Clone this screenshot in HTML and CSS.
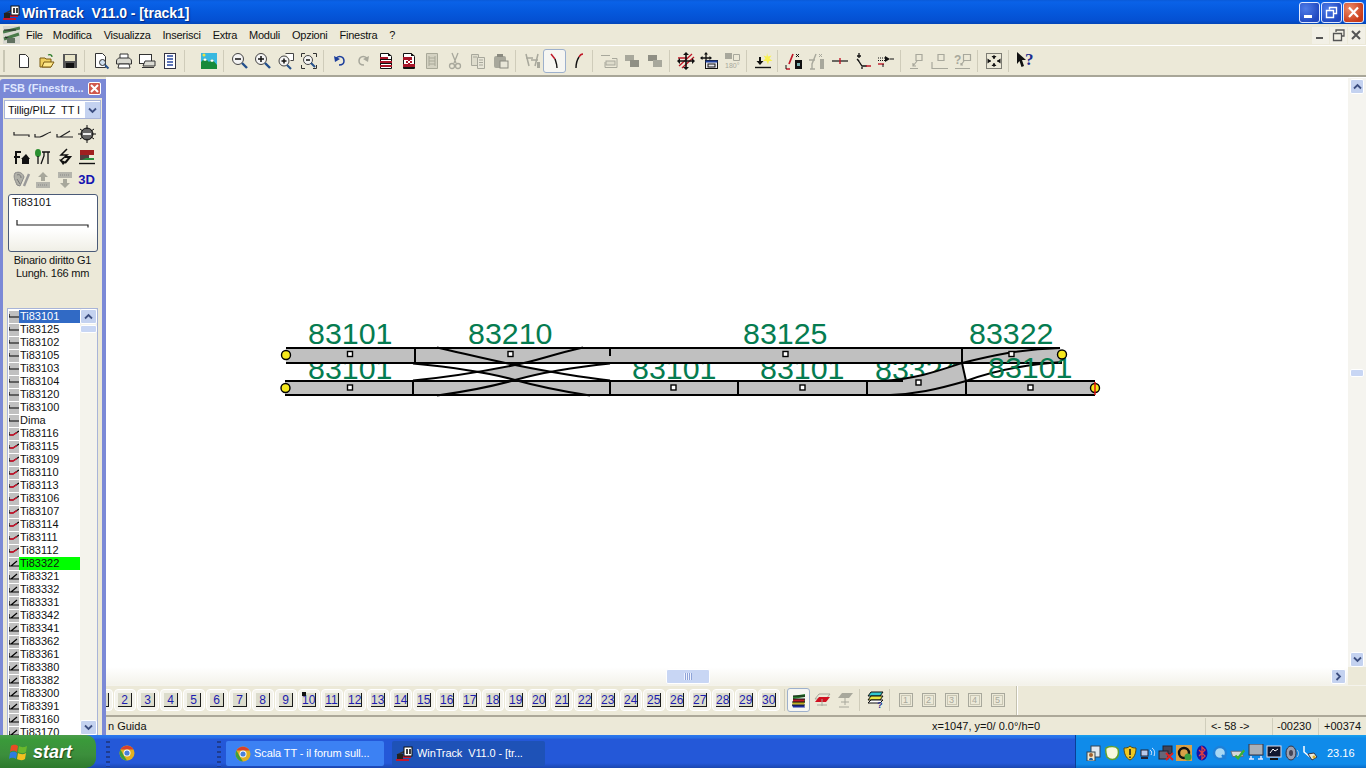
FILE: index.html
```html
<!DOCTYPE html>
<html lang="it">
<head>
<meta charset="utf-8">
<title>WinTrack V11.0 - [track1]</title>
<link rel="stylesheet" href="styles.css">
</head>
<body>
<svg class="defs" width="0" height="0" aria-hidden="true">
  <defs>
    <symbol id="li-straight" viewBox="0 0 10 12"><rect width="10" height="12" fill="#c0c0c0"/><path d="M0 3v3h10" fill="none" stroke="#000" stroke-width="1.2"/></symbol>
    <symbol id="li-curve" viewBox="0 0 10 12"><rect width="10" height="12" fill="#c0c0c0"/><path d="M0 4v3h4l6-4" fill="none" stroke="#000" stroke-width="1.1"/><path d="M1 7h3l4-2.5" fill="none" stroke="#d8102a" stroke-width="1.3"/></symbol>
    <symbol id="li-turnout" viewBox="0 0 10 12"><rect width="10" height="12" fill="#c0c0c0"/><path d="M0 4v4h10M2 8l6-5" fill="none" stroke="#000" stroke-width="1.2"/></symbol>
    <symbol id="chrome" viewBox="0 0 16 16"><circle cx="8" cy="8" r="7.5" fill="#e0b020"/><path d="M1.5 4.5A7.500 7.500 0 0 1 14.5 4.5H8z" fill="#d8402c"/><path d="M1.500 4.500L5 11l3 4.500A7.500 7.500 0 0 1 1.500 4.500z" fill="#3e9e3c"/><circle cx="8" cy="8" r="3.5" fill="#fff"/><circle cx="8" cy="8" r="2.6" fill="#4a80d8"/></symbol>
    <symbol id="wt" viewBox="0 0 18 16"><path d="M1 9l15-7" stroke="#333" stroke-width="1.5"/><path d="M1 11h14M0 14h13" stroke="#c01830" stroke-width="2"/><rect x="8" y="1" width="8" height="9" fill="#fff" stroke="#111"/><path d="M11 3v5M14 3v5" stroke="#111" stroke-width="1.6"/><path d="M1 8h6v5H1z" fill="#222"/></symbol>
  </defs>
</svg>

<header class="titlebar">
  <svg class="ti-icon" width="18" height="16"><use href="#wt"/></svg>
  <span class="ti-text">WinTrack&nbsp; V11.0 - [track1]</span>
  <div class="capbtns">
    <span class="cap cap-b"><svg width="19" height="19"><rect x="4" y="12" width="8" height="3" fill="#fff"/></svg></span>
    <span class="cap cap-b"><svg width="19" height="19"><path d="M7.5 6.500V4.500h7v6h-2.500M4.500 7.500h7v7h-7z" fill="none" stroke="#fff" stroke-width="1.4"/></svg></span>
    <span class="cap cap-r"><svg width="19" height="19"><path d="M5 4.500l9 9.500M14 4.500l-9 9.500" stroke="#fff" stroke-width="2.2"/></svg></span>
  </div>
</header>

<nav class="menubar">
  <svg class="me-icon" width="17" height="18" viewBox="0 0 17 18"><rect width="17" height="18" fill="#d8d8d0"/><path d="M0 6l17-4M1 13l15-5" stroke="#4a7a4a" stroke-width="3"/><path d="M1 4h12M2 11l10 4" stroke="#222" stroke-width="1.2"/><rect x="4" y="12" width="8" height="5" fill="#607060"/></svg>
  <span class="me me-file">File</span><span class="me">Modifica</span><span class="me">Visualizza</span><span class="me">Inserisci</span><span class="me">Extra</span><span class="me">Moduli</span><span class="me">Opzioni</span><span class="me">Finestra</span><span class="me">?</span>
  <div class="mdi">
    <svg width="17" height="17"><rect x="4" y="10" width="7" height="2" fill="#555"/></svg>
    <svg width="17" height="17"><path d="M6 5V3h8v6h-2M3.500 6.500h8v7h-8z" fill="none" stroke="#555" stroke-width="1.3"/></svg>
    <svg width="17" height="17"><path d="M4 4l8 8M12 4l-8 8" stroke="#555" stroke-width="2"/></svg>
  </div>
</nav>

<div class="toolbar">
  <i class="grip"></i>
  <span class="tb"><svg width="16" height="16"><path d="M3.500 1.500h6l3 3v10h-9z" fill="#fff" stroke="#333"/></svg></span>
  <span class="tb"><svg width="16" height="16"><path d="M1 14V5h5l1 1h5v8z" fill="#f0d060" stroke="#7a5a10"/><path d="M3 14l2-5h10l-3 5z" fill="#ffe88a" stroke="#7a5a10"/><path d="M9 2c2-1 4 0 4 2" fill="none" stroke="#2a7a2a" stroke-width="1.3"/></svg></span>
  <span class="tb"><svg width="16" height="16"><rect x="1" y="1" width="14" height="14" fill="#555"/><rect x="3" y="2" width="10" height="6" fill="#e8e4c8"/><rect x="4" y="10" width="8" height="5" fill="#111"/></svg></span>
  <i class="sep"></i>
  <span class="tb"><svg width="18" height="18"><path d="M3.500 1.500h7l3 3v11h-10z" fill="#fff" stroke="#333"/><circle cx="10.500" cy="10.500" r="3" fill="#cfe0f0" stroke="#333"/><path d="M13 13l3.500 3.500" stroke="#25508a" stroke-width="2"/></svg></span>
  <span class="tb"><svg width="18" height="18"><path d="M5 7V2h8v5" fill="#fff" stroke="#333"/><path d="M1.500 9c0-2 2-3 3-3h9c1 0 3 1 3 3v3h-15z" fill="#d8d8d0" stroke="#333"/><path d="M4 12h10l1 4H3z" fill="#fff" stroke="#333"/></svg></span>
  <span class="tb"><svg width="18" height="18"><rect x="1.500" y="2.500" width="12" height="9" fill="#fff" stroke="#333"/><path d="M7 9h10v5H5z" fill="#dcdcd4" stroke="#333"/><path d="M4 15.500h12" stroke="#333"/></svg></span>
  <span class="tb"><svg width="16" height="18"><rect x="2.500" y="1.500" width="11" height="15" fill="#fff" stroke="#334"/><path d="M5 4h6M5 7h6M5 10h6M5 13h6" stroke="#2848a0" stroke-width="1.4"/></svg></span>
  <i class="sep"></i>
  <i class="spacer"></i>
  <span class="tb"><svg width="16" height="16"><rect width="16" height="16" fill="#38b8e0"/><path d="M0 16V9l4-4 4 4 3-3 5 6v4z" fill="#178a3a"/><path d="M4 5l2 2-2 1-2-1zM11 6l2 2-2 1-2-1z" fill="#fff"/><circle cx="3" cy="2" r="1.500" fill="#f0e040"/></svg></span>
  <i class="sep"></i>
  <span class="tb"><svg width="18" height="18"><circle cx="7" cy="7" r="5.500" fill="#f4f4f4" stroke="#444"/><path d="M4 7h6" stroke="#111" stroke-width="1.5"/><path d="M11 11l5 5" stroke="#24508c" stroke-width="2.4"/></svg></span>
  <span class="tb"><svg width="18" height="18"><circle cx="7" cy="7" r="5.500" fill="#f4f4f4" stroke="#444"/><path d="M4 7h6M7 4v6" stroke="#111" stroke-width="1.5"/><path d="M11 11l5 5" stroke="#24508c" stroke-width="2.4"/></svg></span>
  <span class="tb"><svg width="18" height="18"><path d="M8.500 1.500h8v7h-3" fill="#fff" stroke="#444"/><circle cx="7" cy="9" r="5" fill="#f4f4f4" stroke="#444"/><path d="M4.500 9h5M7 6.500v5" stroke="#111" stroke-width="1.5"/><path d="M10 13l4 4" stroke="#24508c" stroke-width="2.2"/></svg></span>
  <span class="tb"><svg width="18" height="18"><path d="M1.500 5V1.500H5M13 1.500h3.500V5M1.500 13v3.500H5M13 16.500h3.500V13" fill="none" stroke="#333"/><circle cx="8" cy="8" r="4.500" fill="#f4f4f4" stroke="#444"/><path d="M6 8h4" stroke="#111" stroke-width="1.5"/><path d="M11 11l4 4" stroke="#24508c" stroke-width="2"/></svg></span>
  <i class="sep"></i>
  <span class="tb"><svg width="16" height="16"><path d="M4 5c4-3 8-1 8 3s-4 4-5 4" fill="none" stroke="#1c3e9c" stroke-width="1.5"/><path d="M2 3l1 6 5-3z" fill="#1c3e9c"/></svg></span>
  <span class="tb"><svg width="16" height="16"><path d="M12 5C8 2 4 4 4 8s4 4 5 4" fill="none" stroke="#a8a89c" stroke-width="1.5"/><path d="M14 3l-1 6-5-3z" fill="#a8a89c"/></svg></span>
  <span class="tb"><svg width="16" height="18"><path d="M2.500 1.500h8l3 3v12h-11z" fill="#fff" stroke="#111"/><path d="M10 1l4 3h-4z" fill="#111"/><path d="M2 5h8v2H2zM2 9h12v2H2zM2 13h12v2H2z" fill="#a81428"/><path d="M3 7.500h10M3 11.500h10" stroke="#111"/></svg></span>
  <span class="tb"><svg width="16" height="18"><path d="M2.500 1.500h8l3 3v12h-11z" fill="#fff" stroke="#111"/><path d="M10 1l4 3h-4z" fill="#111"/><path d="M2 5h9v3H2zM2 12h12v3H2z" fill="#a81428"/><path d="M5 9h2v2H5zM9 9h2v2H9zM7 8h2v1H7zM7 11h2v1H7z" fill="#a81428"/><path d="M3 15.500h10" stroke="#111"/></svg></span>
  <span class="tb"><svg width="16" height="18"><path d="M2.500 1.500h11v15h-11z" fill="#d4d2c2" stroke="#a8a898"/><path d="M5 4v10M11 4v10M5 6h6M5 9h6M5 12h6" stroke="#a8a898"/></svg></span>
  <span class="tb"><svg width="16" height="18"><path d="M5 1l4 10M11 1L7 11" stroke="#a8a89c" stroke-width="1.3"/><circle cx="5" cy="14" r="2.500" fill="none" stroke="#a8a89c" stroke-width="1.3"/><circle cx="11" cy="14" r="2.500" fill="none" stroke="#a8a89c" stroke-width="1.3"/></svg></span>
  <span class="tb"><svg width="16" height="16"><path d="M1.500 1.500h7v11h-7z" fill="#dedccc" stroke="#a8a89c"/><path d="M7.500 4.500h7v11h-7z" fill="#e8e6d8" stroke="#a8a89c"/><path d="M3 4h4M9 7h4M9 9.500h4M9 12h4" stroke="#a8a89c"/></svg></span>
  <span class="tb"><svg width="16" height="16"><rect x="1" y="3" width="12" height="12" rx="2" fill="#a8a89c"/><rect x="4" y="1" width="6" height="3" fill="#8a8a80"/><rect x="7" y="8" width="8" height="7" fill="#e8e6d8" stroke="#8a8a80"/></svg></span>
  <i class="sep"></i>
  <span class="tb"><svg width="18" height="18"><path d="M3 2l3 12M15 2l-3 12M3 6h7M15 8H8" stroke="#a8a89c" stroke-width="1.5" fill="none"/><rect x="14" y="10" width="3" height="6" fill="#a8a89c"/></svg></span>
  <span class="tb tb-on"><svg width="16" height="18"><path d="M4 2l4 5" stroke="#c01828" stroke-width="1.5"/><path d="M8 7c1 3 2 5 2 9" fill="none" stroke="#111" stroke-width="1.4"/></svg></span>
  <span class="tb"><svg width="16" height="18"><path d="M13 2c-2 0-3 1-4 3" fill="none" stroke="#c01828" stroke-width="1.5"/><path d="M9 5c-2 3-3 7-3 11" fill="none" stroke="#111" stroke-width="1.4"/></svg></span>
  <i class="sep"></i>
  <span class="tb"><svg width="18" height="16"><path d="M1 2.500h9M12 5.500h5v9H5V9" fill="none" stroke="#a8a89c"/><rect x="6" y="8" width="9" height="4" fill="#dedccc" stroke="#a8a89c"/></svg></span>
  <span class="tb"><svg width="18" height="16"><path d="M2 2h9v6H2z" fill="#a8a89c"/><path d="M7 7h9v7H7z" fill="#8f8f84"/></svg></span>
  <span class="tb"><svg width="18" height="16"><path d="M2 2h9v6H2z" fill="#8f8f84"/><path d="M7 7h9v7H7z" fill="#a8a89c"/></svg></span>
  <i class="sep"></i>
  <span class="tb"><svg width="18" height="18"><path d="M2 14L15 2M5 16L17 5M1 6h9" stroke="#c01828" stroke-width="1.3"/><path d="M9 1v16M1 9h16" stroke="#111" stroke-width="1.6"/><path d="M9 0l-3 3h6zM9 18l-3-3h6zM0 9l3-3v6zM18 9l-3-3v6z" fill="#111"/></svg></span>
  <span class="tb"><svg width="18" height="18"><path d="M6 1v11M1 6h10" stroke="#111" stroke-width="1.3"/><path d="M6 0L4 2.500h4zM0 6l2.500-2v4zM12 6L9.500 4v4z" fill="#111"/><rect x="5.500" y="8.500" width="12" height="8" fill="#e8e8f0" stroke="#111"/><rect x="5.500" y="8.500" width="12" height="2" fill="#1c3e9c"/><rect x="8" y="12" width="7" height="3" fill="none" stroke="#111"/></svg></span>
  <span class="tb"><svg width="18" height="18"><path d="M2 1h7v6H2z" fill="#a8a89c"/><path d="M10.500 2.500h6v6h-6z" fill="none" stroke="#a8a89c"/><text class="deg" x="2" y="16">180°</text></svg></span>
  <i class="sep"></i>
  <span class="tb"><svg width="20" height="16"><path d="M2 14.500h16" stroke="#111" stroke-width="1.4"/><path d="M7 4v6" stroke="#111" stroke-width="2"/><path d="M3.500 8h7L7 12z" fill="#111"/><path d="M14 0l1 3.500 3.500-1-2 3 3 2.500-3.500 0-1 3.500-1.500-3.500-3.500 0 2.500-2.500-2-3 3 1z" fill="#f8f050"/></svg></span>
  <i class="sep"></i>
  <span class="tb"><svg width="18" height="18"><path d="M8 2L4 12M1 17h4" stroke="#c01828" stroke-width="1.7" fill="none"/><path d="M1 17v-4M11 2l3 3M14 2l-3 3" stroke="#111"/><rect x="10" y="8" width="7" height="9" fill="#111"/><rect x="12" y="11" width="3" height="3" fill="#7ab0b0"/></svg></span>
  <span class="tb"><svg width="18" height="18"><path d="M8 2L4 12v5M1 8h6M2 17h5" stroke="#a8a89c" stroke-width="1.4" fill="none"/><path d="M11 2l3 3M14 2l-3 3" stroke="#a8a89c"/><rect x="12" y="7" width="4" height="10" fill="#a8a89c"/></svg></span>
  <span class="tb"><svg width="18" height="16"><path d="M1 8h16" stroke="#111" stroke-width="1.2"/><path d="M9 5v6" stroke="#c01828" stroke-width="1.4"/></svg></span>
  <span class="tb"><svg width="18" height="18"><path d="M5 1v5M3 4h4M4 8l4 6h5" fill="none" stroke="#111" stroke-width="1.3"/><path d="M12 14h5" stroke="#c01828" stroke-width="1.5"/><path d="M8 15v2M3 7l2 2" stroke="#111" stroke-width="1.3"/></svg></span>
  <span class="tb"><svg width="18" height="16"><path d="M1 5h7M1 7.500h7" stroke="#111" stroke-dasharray="1 1"/><path d="M8 3l5 3-5 3z" fill="#111"/><path d="M13 6h4" stroke="#111"/><path d="M1 11h6" stroke="#c01828" stroke-width="1.4"/><path d="M6 11v3" stroke="#111"/></svg></span>
  <i class="sep"></i>
  <span class="tb"><svg width="18" height="18"><path d="M2 16.500h8M8 2.500h6v6H8zM9 9l-4 5M5 11v3h3" fill="none" stroke="#a8a89c" stroke-width="1.2"/></svg></span>
  <span class="tb"><svg width="18" height="18"><path d="M1 10v6.500h16M7 2.500h6v6H7z" fill="none" stroke="#a8a89c" stroke-width="1.2"/></svg></span>
  <span class="tb"><svg width="18" height="18"><text class="qd" x="0" y="12">?</text><path d="M1 16.500h15M9.500 2.500h7v6h-7zM10 9l-3 4M7 11v2h2" fill="none" stroke="#a8a89c" stroke-width="1.2"/></svg></span>
  <i class="sep"></i>
  <span class="tb"><svg width="18" height="18"><rect x="1.500" y="1.500" width="15" height="15" fill="none" stroke="#111" stroke-dasharray="1 1"/><path d="M9 3v4M9 11v4M3 9h3M12 9h3" stroke="#111"/><path d="M6 9L2.500 6.500v5zM12 9l3.500-2.500v5zM9 7L6.500 4h5zM9 11l-2.500 3h5z" fill="#111"/></svg></span>
  <i class="sep"></i>
  <span class="tb"><svg width="22" height="20"><path d="M3 1l9 8H8l2 6-2.500 1-2-6L3 13z" fill="#111"/><text class="qm" x="11" y="14">?</text></svg></span>
</div>

<main class="workspace">
  <aside class="panel">
    <div class="pa-title"><span>FSB (Finestra...</span><b class="pa-x"><svg width="11" height="11"><path d="M2 2l7 7M9 2l-7 7" stroke="#fff" stroke-width="2"/></svg></b></div>
    <div class="combo"><span>Tillig/PILZ&nbsp; TT I</span><b class="combo-b"><svg width="9" height="7"><path d="M1 1.500l3.500 3.500L8 1.500" fill="none" stroke="#3c4e80" stroke-width="1.8"/></svg></b></div>
    <div class="pa-icons">
      <svg width="18" height="16"><path d="M1 6v3h15v2" fill="none" stroke="#222" stroke-width="1.2"/></svg>
      <svg width="18" height="16"><path d="M1 8v3h5c4-1 7-4 11-5" fill="none" stroke="#222" stroke-width="1.2"/></svg>
      <svg width="18" height="16"><path d="M1 8v3h16M4 11l10-6" fill="none" stroke="#222" stroke-width="1.2"/></svg>
      <svg width="18" height="18"><circle cx="9" cy="9" r="6" fill="#555" stroke="#111"/><path d="M0 9h18M2 4l14 10M2 14L16 4M9 0v18" stroke="#111"/><circle cx="9" cy="9" r="5" fill="#666"/><path d="M5 9h8" stroke="#eee" stroke-width="2"/></svg>

      <svg width="18" height="18"><path d="M3 16V4h5M1 9h6" fill="none" stroke="#111" stroke-width="2"/><path d="M8 11l5-5 4 5zM9 11v5h7v-5z" fill="#111"/></svg>
      <svg width="18" height="18"><ellipse cx="4" cy="5" rx="3" ry="4" fill="#2a9030"/><path d="M4 8v8M8 4h8M10 4v4l-3 8M14 4v12" fill="none" stroke="#111" stroke-width="1.3"/></svg>
      <svg width="18" height="18"><path d="M11 1L5 7h6L4 13" fill="none" stroke="#111" stroke-width="1.5"/><path d="M9 9h5l-5 6" fill="none" stroke="#111" stroke-width="2"/><path d="M3 11l4 6 3-3z" fill="#111"/></svg>
      <svg width="18" height="18"><rect x="2" y="2" width="14" height="5" fill="#a02020"/><rect x="2" y="7" width="9" height="5" fill="#504040"/><path d="M8 10h8v2H4z" fill="#2a9040"/><path d="M1 15.500h16" stroke="#111" stroke-width="1.4"/></svg>

      <svg width="20" height="20"><path d="M3 3c4-2 8 0 9 4l-4 9-3-1C3 10 1 7 3 3z" fill="#b0b0a8" stroke="#888"/><path d="M5 5c2-1 4 0 4 3M5 9l3 5" stroke="#777" fill="none"/><path d="M17 4l-5 12" stroke="#999" stroke-width="2.4"/></svg>
      <svg width="18" height="18"><path d="M9 1l5 5h-3v4H7V6H4z" fill="#a8a89c"/><rect x="2" y="11" width="14" height="6" fill="#b4b4ac"/><path d="M4 14h10" stroke="#888" stroke-dasharray="1 1"/></svg>
      <svg width="18" height="18"><rect x="2" y="1" width="14" height="6" fill="#b4b4ac"/><path d="M4 4h10" stroke="#888" stroke-dasharray="1 1"/><path d="M9 17l5-5h-3V8H7v4H4z" fill="#a8a89c"/></svg>
      <span class="threed">3D</span>
    </div>
    <div class="preview">
      <span>Ti83101</span>
      <svg class="pv-shape" width="76" height="8"><path d="M1 0v5h71v2.500" fill="none" stroke="#222" stroke-width="1.2"/></svg>
    </div>
    <div class="pa-cap">Binario diritto G1<br>Lungh. 166 mm</div>
    <div class="list">
      <ul class="li-items">
        <li class="sel"><svg width="10" height="12"><use href="#li-straight"/></svg><span>Ti83101</span></li>
        <li><svg width="10" height="12"><use href="#li-straight"/></svg><span>Ti83125</span></li>
        <li><svg width="10" height="12"><use href="#li-straight"/></svg><span>Ti83102</span></li>
        <li><svg width="10" height="12"><use href="#li-straight"/></svg><span>Ti83105</span></li>
        <li><svg width="10" height="12"><use href="#li-straight"/></svg><span>Ti83103</span></li>
        <li><svg width="10" height="12"><use href="#li-straight"/></svg><span>Ti83104</span></li>
        <li><svg width="10" height="12"><use href="#li-straight"/></svg><span>Ti83120</span></li>
        <li><svg width="10" height="12"><use href="#li-straight"/></svg><span>Ti83100</span></li>
        <li><svg width="10" height="12"><use href="#li-straight"/></svg><span>Dima</span></li>
        <li><svg width="10" height="12"><use href="#li-curve"/></svg><span>Ti83116</span></li>
        <li><svg width="10" height="12"><use href="#li-curve"/></svg><span>Ti83115</span></li>
        <li><svg width="10" height="12"><use href="#li-curve"/></svg><span>Ti83109</span></li>
        <li><svg width="10" height="12"><use href="#li-curve"/></svg><span>Ti83110</span></li>
        <li><svg width="10" height="12"><use href="#li-curve"/></svg><span>Ti83113</span></li>
        <li><svg width="10" height="12"><use href="#li-curve"/></svg><span>Ti83106</span></li>
        <li><svg width="10" height="12"><use href="#li-curve"/></svg><span>Ti83107</span></li>
        <li><svg width="10" height="12"><use href="#li-curve"/></svg><span>Ti83114</span></li>
        <li><svg width="10" height="12"><use href="#li-curve"/></svg><span>Ti83111</span></li>
        <li><svg width="10" height="12"><use href="#li-curve"/></svg><span>Ti83112</span></li>
        <li class="mark"><svg width="10" height="12"><use href="#li-turnout"/></svg><span>Ti83322</span></li>
        <li><svg width="10" height="12"><use href="#li-turnout"/></svg><span>Ti83321</span></li>
        <li><svg width="10" height="12"><use href="#li-turnout"/></svg><span>Ti83332</span></li>
        <li><svg width="10" height="12"><use href="#li-turnout"/></svg><span>Ti83331</span></li>
        <li><svg width="10" height="12"><use href="#li-turnout"/></svg><span>Ti83342</span></li>
        <li><svg width="10" height="12"><use href="#li-turnout"/></svg><span>Ti83341</span></li>
        <li><svg width="10" height="12"><use href="#li-turnout"/></svg><span>Ti83362</span></li>
        <li><svg width="10" height="12"><use href="#li-turnout"/></svg><span>Ti83361</span></li>
        <li><svg width="10" height="12"><use href="#li-turnout"/></svg><span>Ti83380</span></li>
        <li><svg width="10" height="12"><use href="#li-turnout"/></svg><span>Ti83382</span></li>
        <li><svg width="10" height="12"><use href="#li-turnout"/></svg><span>Ti83300</span></li>
        <li><svg width="10" height="12"><use href="#li-turnout"/></svg><span>Ti83391</span></li>
        <li><svg width="10" height="12"><use href="#li-turnout"/></svg><span>Ti83160</span></li>
        <li><svg width="10" height="12"><use href="#li-turnout"/></svg><span>Ti83170</span></li>
      </ul>
      <div class="li-scroll">
        <b class="sb-btn"><svg width="9" height="7"><path d="M1 5.500L4.500 2 8 5.500" fill="none" stroke="#3c4e80" stroke-width="1.8"/></svg></b>
        <b class="li-thumb"></b>
        <b class="sb-btn sb-end"><svg width="9" height="7"><path d="M1 1.500L4.500 5 8 1.500" fill="none" stroke="#3c4e80" stroke-width="1.8"/></svg></b>
      </div>
    </div>
  </aside>

  <section class="doc">
    <div class="canvas-row">
      <svg class="canvas" viewBox="106 78 1242 589" width="1242" height="589">
        <g class="labels">
          <text x="308" y="344">83101</text>
          <text x="468" y="344">83210</text>
          <text x="743" y="344">83125</text>
          <text x="969" y="344">83322</text>
          <text x="308" y="379">83101</text>
          <text x="632" y="379">83101</text>
          <text x="760" y="379">83101</text>
          <text x="875" y="380">83324</text>
        </g>
        <g class="track">
          <path d="M286 348H415V363H286z"/>
          <path d="M415 348H610V363H415z"/>
          <path d="M482 372L515 365L548 372L515 380z"/>
          <path d="M610 348H962V363H610z"/>
          <path d="M962 348H1060L1063 354L1060 363H962z"/>
          <path d="M285 381H413V395H285z"/>
          <path d="M413 381H610V395H413z"/>
          <path d="M610 381H738V395H610z"/>
          <path d="M738 381H867V395H738z"/>
          <path d="M867 381C905 381 935 372 962 363L966 381V395H867z"/>
          <path d="M966 381H1095V395H966z"/>
        </g>
        <g class="rails">
          <path d="M415 348V363M413 381V395M610 356V348M610 381V395M738 381V395M867 381V395M966 381V395M962 348V363"/>
          <path d="M437 347.500C470 355 490 360 515 365S570 376 610 380.500"/>
          <path d="M413 363.500C450 367 490 373 515 380S560 391 590 395.500"/>
          <path d="M583 347.500C550 355 540 360 515 365S450 377 413 380.500"/>
          <path d="M610 363.500C575 367 540 373 515 380S470 391 437 395.500"/>
          <path d="M286 348H1060M286 363H1062M285 381H903M966 381H1095M285 395H1095"/>
          <path d="M880 381C915 379 935 372 962 363C990 356 1020 349 1060 348M890 395C915 394 935 390 966 381C990 372 1020 365 1062 362"/>
          <path d="M962 363L966 381"/>
        </g>
        <g class="nodes">
          <rect x="347.500" y="351.500" width="5" height="5"/>
          <rect x="508" y="351.500" width="5" height="5"/>
          <rect x="783" y="351.500" width="5" height="5"/>
          <rect x="1009" y="351.500" width="5" height="5"/>
          <rect x="347.500" y="385" width="5" height="5"/>
          <rect x="671" y="385" width="5" height="5"/>
          <rect x="800" y="385" width="5" height="5"/>
          <rect x="916" y="380" width="5" height="5"/>
          <rect x="1028" y="385" width="5" height="5"/>
        </g>
        <g class="labels"><text x="988" y="378">83101</text></g>
        <g class="ends">
          <circle cx="286" cy="355" r="4.500"/>
          <circle cx="285.500" cy="388" r="4.500"/>
          <circle cx="1062" cy="354.500" r="4.500"/>
          <circle cx="1095" cy="388" r="4.500"/>
        </g>
        <path class="redend" d="M1095 382V395"/>
      </svg>
      <div class="vscroll">
        <b class="sb-btn"><svg width="9" height="7"><path d="M1 5.500L4.500 2 8 5.500" fill="none" stroke="#3c4e80" stroke-width="1.8"/></svg></b>
        <b class="v-thumb"></b>
        <b class="sb-btn sb-end"><svg width="9" height="7"><path d="M1 1.500L4.500 5 8 1.500" fill="none" stroke="#3c4e80" stroke-width="1.8"/></svg></b>
      </div>
    </div>
    <div class="hscroll">
      <div class="h-track">
        <b class="h-thumb"><i></i></b>
        <b class="sb-btn sb-right"><svg width="7" height="9"><path d="M1.500 1L5 4.500 1.500 8" fill="none" stroke="#3c4e80" stroke-width="1.8"/></svg></b>
      </div>
      <div class="corner"></div>
    </div>
    <div class="tabs">
      <div class="pages">
        <span class="pg pg-first"><u>1</u></span><span class="pg"><u>2</u></span><span class="pg"><u>3</u></span><span class="pg"><u>4</u></span><span class="pg"><u>5</u></span><span class="pg"><u>6</u></span><span class="pg"><u>7</u></span><span class="pg"><u>8</u></span><span class="pg"><u>9</u></span><span class="pg pg-cur"><u>10</u></span><span class="pg"><u>11</u></span><span class="pg"><u>12</u></span><span class="pg"><u>13</u></span><span class="pg"><u>14</u></span><span class="pg"><u>15</u></span><span class="pg"><u>16</u></span><span class="pg"><u>17</u></span><span class="pg"><u>18</u></span><span class="pg"><u>19</u></span><span class="pg"><u>20</u></span><span class="pg"><u>21</u></span><span class="pg"><u>22</u></span><span class="pg"><u>23</u></span><span class="pg"><u>24</u></span><span class="pg"><u>25</u></span><span class="pg"><u>26</u></span><span class="pg"><u>27</u></span><span class="pg"><u>28</u></span><span class="pg"><u>29</u></span><span class="pg"><u>30</u></span>
      </div>
      <i class="sep sep-t"></i>
      <span class="tb tb-on"><svg width="16" height="18"><path d="M2 5L14 3v3L2 8zM2 8h12v3H2z" fill="#2a8030"/><path d="M2 8h12l-1 3H2z" fill="#c01828"/><path d="M2 11h12l-1 2.500H1z" fill="#c0b020"/><path d="M1 14h12l1 2.500H2z" fill="#1c2ea0"/><path d="M2 5h12M2 8h12M1 11h13M1 14h13" stroke="#111"/></svg></span>
      <span class="tb"><svg width="18" height="18"><path d="M6 3h11L13 8H2z" fill="none" stroke="#a8a89c"/><path d="M6 6h11l-4 5H2z" fill="#d01020"/><path d="M4 14h10" stroke="#a8a89c"/><path d="M9 8v7" stroke="#a8a89c"/></svg></span>
      <span class="tb"><svg width="18" height="18"><path d="M6 2h11l-4 5H2z" fill="#a8a89c"/><path d="M9 7v7M5 11h8M3 16h10" stroke="#a8a89c"/></svg></span>
      <i class="sep sep-t2"></i>
      <span class="tb"><svg width="18" height="18"><path d="M5 1h12l-3 4H2z" fill="#30c8d0" stroke="#111"/><path d="M5 5h12l-3 4H2z" fill="#e8e840" stroke="#111"/><path d="M5 9h12l-3 3H2z" fill="#fff" stroke="#111"/><text class="qb" x="11" y="17">?</text></svg></span>
      <i class="sep sep-t3"></i>
      <span class="ly"><u>1</u></span><span class="ly"><u>2</u></span><span class="ly"><u>3</u></span><span class="ly"><u>4</u></span><span class="ly"><u>5</u></span>
      <i class="tabs-end"></i>
    </div>
    <footer class="status">
      <span class="st st-help">n Guida</span>
      <span class="st st-xy">x=1047, y=0/ 0.0°/h=0</span>
      <span class="st st-a">&lt;- 58 -&gt;</span>
      <span class="st st-b">-00230</span>
      <span class="st st-c">+00374</span>
    </footer>
  </section>
</main>

<footer class="taskbar">
  <div class="start">
    <svg width="20" height="20" viewBox="0 0 20 20"><path d="M2 4c3-2 5-1 7 0l-1 6c-2-1-4-2-7 0z" fill="#e84c24"/><path d="M10 4c2 1 4 2 8 0l-1 6c-3 2-6 1-8 0z" fill="#6ab82c"/><path d="M1 11c3-2 5-1 7 0l-1 6c-2-1-4-2-7 0z" fill="#2e7ce0"/><path d="M9 11c2 1 5 2 8 0l-1 6c-3 2-6 1-8 0z" fill="#f4c020"/></svg>
    <span>start</span>
  </div>
  <i class="tk-grip"></i>
  <svg class="ql" width="16" height="16"><use href="#chrome"/></svg>
  <i class="tk-grip"></i>
  <div class="task"><svg width="16" height="16"><use href="#chrome"/></svg><span>Scala TT - il forum sull...</span></div>
  <div class="task task-on"><svg width="18" height="16"><use href="#wt"/></svg><span>WinTrack&nbsp; V11.0 - [tr...</span></div>
  <div class="tray">
    <svg width="16" height="16"><rect x="5" y="1" width="9" height="11" fill="#dfe8f0" stroke="#345"/><rect x="1" y="7" width="8" height="9" fill="#f0e8d0" stroke="#345"/><circle cx="5" cy="10" r="2" fill="#a06030"/><path d="M3 15c0-3 4-3 4 0" fill="#2060a0"/></svg>
    <svg width="16" height="16"><path d="M2 3c4-2 10-2 12 1 1 4 0 8-3 10-3 1-6 0-8-2C2 9 1 6 2 3z" fill="#f8f8e0" stroke="#60a030" stroke-width="1.5"/></svg>
    <svg width="16" height="16"><path d="M8 1c2 2 4 2 6 2 0 6-2 10-6 12C4 13 2 9 2 3c2 0 4 0 6-2z" fill="#f0c820" stroke="#5a4a10"/><path d="M8 4v6M8 11.500v1.500" stroke="#222" stroke-width="1.6"/></svg>
    <svg width="16" height="16"><rect x="1" y="5" width="7" height="6" fill="#b8c8e8" stroke="#223"/><path d="M1 13h7" stroke="#223" stroke-width="2"/><path d="M10 5c2 1 2 3 1 5M12 3c3 2 3 5 2 8" fill="none" stroke="#dfe8ff"/></svg>
    <svg width="16" height="16"><rect x="5" y="1" width="9" height="8" fill="#445" stroke="#223"/><rect x="1" y="6" width="9" height="8" fill="#667" stroke="#223"/><path d="M8 8l7 7M15 8l-7 7" stroke="#e02020" stroke-width="2"/></svg>
    <svg width="16" height="16"><rect width="16" height="16" fill="#d8a048"/><circle cx="8" cy="8" r="5" fill="none" stroke="#111" stroke-width="2.4"/><circle cx="12" cy="12" r="3.500" fill="#3aa040"/></svg>
    <svg width="16" height="16" viewBox="-2 0 16 16"><ellipse cx="6" cy="8" rx="5.500" ry="7.500" fill="#1414a8"/><path d="M3 5l6 6-3 3V2l3 3-6 6" fill="none" stroke="#e04040" stroke-width="1.3"/></svg>
    <svg width="16" height="16"><circle cx="8" cy="8" r="6" fill="#a8d8f4" stroke="#1e80d8" stroke-width="2.4"/><path d="M10 10l4 4" stroke="#1e80d8" stroke-width="2.4"/></svg>
    <svg width="16" height="16" viewBox="0 0 18 16"><path d="M1 6h12l2 6H3z" fill="#d8d8d8" stroke="#667"/><path d="M6 11l3 3 7-9" fill="none" stroke="#38b038" stroke-width="2.6"/></svg>
    <svg width="16" height="18"><rect x="1" y="0" width="14" height="11" fill="#a8b0b8" stroke="#334"/><path d="M1 15h5M10 15h5M3 12v3M13 12v3" stroke="#dfe8ff" stroke-width="1.5"/></svg>
    <svg width="16" height="16"><rect x="1" y="1" width="14" height="11" fill="#101830" stroke="#dde"/><path d="M4 8l3-4 2 2 3-2" stroke="#fff" fill="none"/><path d="M4 14h8" stroke="#111" stroke-width="2"/></svg>
    <svg width="16" height="16"><ellipse cx="7" cy="8" rx="5" ry="7" fill="#9aa0b0" stroke="#334"/><ellipse cx="7" cy="8" rx="2" ry="3" fill="#445"/><path d="M13 5c2 2 2 5 0 7" fill="none" stroke="#bcd"/></svg>
    <svg width="16" height="16"><path d="M2 1v6l6 5" fill="none" stroke="#fff" stroke-width="1.5"/><path d="M6 9l6-1 3 4-5 3z" fill="#e8e8d8" stroke="#334"/><circle cx="12" cy="12" r="1.500" fill="#e0b020"/></svg>
    <span class="clock">23.16</span>
  </div>
</footer>
</body>
</html>
```

FILE: styles.css
```css
* { box-sizing: border-box; }
html, body { margin: 0; padding: 0; }
body {
  width: 1366px;
  height: 768px;
  overflow: hidden;
  display: flex;
  flex-direction: column;
  background: #ece9d8;
  font: 11px/13px "Liberation Sans", Arial, sans-serif;
  color: #111;
}
.defs { display: block; height: 0; width: 0; }
svg { display: block; flex: none; }
i, b, u { font-style: normal; font-weight: normal; text-decoration: none; }

/* Title bar */
.titlebar {
  height: 24px;
  flex: none;
  display: flex;
  align-items: center;
  padding: 1px 2px 0 3px;
  background: linear-gradient(#0a5ad8 0, #0a62e8 8%, #0558dc 50%, #0450d2 85%, #0446b8 100%);
  color: #fff;
}
.ti-icon { margin-right: 1px; }
.ti-text { font: bold 14px/18px "Liberation Sans", Arial, sans-serif; letter-spacing: -0.05px; text-shadow: 1px 1px 1px #0a2a80; white-space: nowrap; padding-top: 1px; }
.capbtns { margin-left: auto; display: flex; gap: 1px; }
.cap { width: 21px; height: 21px; border: 1px solid #dfe8ff; border-radius: 3px; }
.cap-b { background: radial-gradient(circle at 30% 30%, #4f7ce8, #2048c0 75%); }
.cap-r { background: radial-gradient(circle at 30% 30%, #ee8a68, #c83a18 75%); }

/* Menu */
.menubar {
  height: 22px;
  flex: none;
  display: flex;
  align-items: center;
  padding: 1px 0 0 3px;
  border-bottom: 1px solid #fff;
}
.me-icon { margin-right: 6px; }
.me { margin-right: 12px; white-space: nowrap; letter-spacing: -0.25px; }
.me-file { margin-right: 10px; }
.mdi { margin-left: auto; display: flex; gap: 1px; margin-right: 1px; }
.mdi svg { background: #f2f0e6; }

/* Toolbars */
.toolbar {
  height: 31px;
  flex: none;
  display: flex;
  align-items: center;
  padding: 1px 0 0 3px;
  border-bottom: 2px solid #a8a698;
}
.grip { width: 2px; height: 22px; background: #c8c6b4; margin-right: 7px; }
.tb {
  width: 23px;
  height: 24px;
  flex: none;
  display: flex;
  align-items: center;
  justify-content: center;
}
.tb-on { background: #f6f6f2; border: 1px solid #9db0cc; border-radius: 3px; }
.sep { width: 1px; height: 22px; background: #cfccba; margin: 0 4px 0 3px; flex: none; }
.spacer { width: 8px; flex: none; }
.deg { font: 7px "Liberation Sans", Arial, sans-serif; fill: #a8a89c; }
.qd { font: bold 12px "Liberation Sans", Arial, sans-serif; fill: #a8a89c; }
.qm { font: bold 17px "Liberation Serif", serif; fill: #1c2e90; }
.qb { font: bold 9px "Liberation Sans", Arial, sans-serif; fill: #1c2e90; }

/* Workspace */
.workspace { flex: 1; min-height: 0; display: flex; }

/* Left panel */
.panel {
  width: 106px;
  flex: none;
  display: flex;
  flex-direction: column;
  margin-top: 2px;
  background: #ece9d8;
  border: solid #7b89d6;
  border-width: 0 4px 0 3px;
  border-top-left-radius: 3px;
  overflow: hidden;
}
.pa-title {
  height: 19px;
  flex: none;
  margin: 0 -4px 0 -3px;
  padding: 0 4px 0 3px;
  display: flex;
  align-items: center;
  justify-content: space-between;
  background: #7b89d6;
  color: #dfe6ff;
  font-weight: bold;
  white-space: nowrap;
}
.pa-x { width: 13px; height: 13px; display: flex; align-items: center; justify-content: center; background: #d0584c; border: 1px solid #fff; border-radius: 2px; margin-right: 1px; }
.combo {
  height: 19px;
  flex: none;
  margin: 2px 1px 0 1px;
  padding: 1px 0 0 3px;
  display: flex;
  align-items: center;
  justify-content: space-between;
  background: #fff;
  border: 1px solid #a8b4d8;
  white-space: nowrap;
  letter-spacing: -0.1px;
}
.combo-b { width: 15px; height: 16px; flex: none; display: flex; align-items: center; justify-content: center; background: #c4d2f0; }
.pa-icons {
  flex: none;
  display: grid;
  grid-template-columns: repeat(4, 21.6px);
  grid-auto-rows: 23px;
  justify-items: center;
  align-items: center;
  padding: 3px 0 0 8px;
  height: 75px;
}
.threed { font: bold 13px/13px "Liberation Sans", Arial, sans-serif; color: #1414b0; }
.preview {
  height: 58px;
  flex: none;
  margin: 0 4px 0 5px;
  padding: 1px 3px;
  background: linear-gradient(#fff 60%, #f0efe6);
  border: 1px solid #4a5a78;
  border-radius: 3px;
}
.pv-shape { margin: 11px 0 0 4px; }
.pa-cap { height: 56px; flex: none; padding-top: 2px; text-align: center; letter-spacing: -0.25px; }
.list {
  flex: 1;
  min-height: 0;
  margin: 0 4px;
  display: flex;
  background: #fff;
  border: solid #a8b4d8;
  border-width: 1px 1px 0;
  overflow: hidden;
}
.li-items { list-style: none; margin: 0; padding: 1px 0 0 1px; width: 72px; flex: none; overflow: hidden; }
.li-items li { height: 13px; display: flex; align-items: center; white-space: nowrap; }
.li-items li span { flex: 1; height: 13px; padding-left: 1px; }
.li-items .sel span { background: #316ac5; color: #fff; }
.li-items .mark span { background: #00ff00; }
.li-scroll { flex: 1; display: flex; flex-direction: column; background: #f4f3ec; }
.sb-btn { height: 15px; flex: none; display: flex; align-items: center; justify-content: center; background: #c4d2f0; border: 1px solid #fff; border-radius: 2px; }
.li-thumb { height: 8px; flex: none; margin-top: 1px; background: #c8d6f4; border: 1px solid #fff; border-radius: 2px; }
.sb-end { margin-top: auto; }

/* Document */
.doc { flex: 1; min-width: 0; display: flex; flex-direction: column; }
.canvas-row { height: 590px; flex: none; display: flex; border-top: 1px solid #fff; background: #fff; }
.canvas { background: #fff; }
.labels text { font: 30.4px "Liberation Sans", Arial, sans-serif; fill: #057c50; }
.track path { fill: #c0c0c0; }
.rails path { fill: none; stroke: #000; stroke-width: 2; }
.nodes rect { fill: #fff; stroke: #000; stroke-width: 1.4; }
.ends circle { fill: #f5e81c; stroke: #000; stroke-width: 1.4; }
.redend { stroke: #e01010; stroke-width: 1.5; fill: none; }
.vscroll {
  flex: 1;
  display: flex;
  flex-direction: column;
  padding: 1px 2px 0;
  background: #f5f4ef;
}
.vscroll .sb-btn { height: 15px; }
.v-thumb { height: 8px; flex: none; margin-top: 275px; background: #c8d6f4; border: 1px solid #fff; border-radius: 2px; }
.hscroll { height: 18px; flex: none; display: flex; background: #f5f4ef; }
.h-track { flex: 1; min-width: 0; display: flex; align-items: center; padding: 0 2px 0 560px; background: linear-gradient(#fff, #f3f2ea); }
.h-thumb { width: 44px; height: 15px; display: flex; align-items: center; justify-content: center; background: #c8d6f4; border: 1px solid #fff; border-radius: 2px; }
.h-thumb i { width: 8px; height: 7px; background: repeating-linear-gradient(90deg, #eef2ff 0 1px, #8ea4d8 1px 2px); }
.sb-right { width: 15px; height: 15px; margin-left: auto; }
.corner { width: 18px; flex: none; background: #ece9d8; }

.tabs {
  height: 32px;
  flex: none;
  display: flex;
  align-items: center;
  overflow: hidden;
  padding-bottom: 2px;
  border-bottom: 2px solid #aca899;
  border-top: 1px solid #f4f3ec;
}
.pages { display: flex; flex: none; margin-left: -15px; }
.pg {
  width: 22px;
  height: 22px;
  margin-right: 1px;
  flex: none;
  display: flex;
  align-items: center;
  justify-content: center;
  background: #f4f3ec;
  border: 1px solid #fff;
  border-radius: 4px;
  position: relative;
}
.pg u {
  width: 14px;
  height: 14px;
  display: block;
  text-align: center;
  font-size: 12px;
  line-height: 14px;
  color: #1c1cb0;
  background: #dcdccc;
  border: solid #1a1a1a;
  border-width: 0 1px 1px 0;
}
.pg-cur::before { content: ""; position: absolute; left: 3px; top: 2px; width: 4px; height: 4px; background: #111; }
.sep-t { margin: 0 2px 0 3px; }
.sep-t2 { margin: 0 3px 0 3px; }
.sep-t3 { margin: 0 4px 0 3px; }
.ly { width: 23px; height: 24px; display: flex; align-items: center; justify-content: center; flex: none; }
.ly u { width: 14px; height: 14px; display: block; text-align: center; line-height: 12px; border: 1px solid #a8a89c; outline: 1px solid #c8c6b4; outline-offset: -3px; color: #a8a89c; font-size: 9px; }
.tabs-end { margin-left: 7px; width: 1px; height: 30px; background: #c4c2b0; box-shadow: 1px 0 #fff; flex: none; }

.status { height: 18px; flex: none; display: flex; align-items: center; background: #ece9d8; }
.st { white-space: nowrap; height: 17px; line-height: 17px; }
.st-help { padding-left: 2px; width: 826px; }
.st-xy { width: 273px; }
.st-a { width: 67px; padding-left: 5px; border-left: 1px solid #d0cebc; }
.st-b { width: 46px; padding-left: 4px; border-left: 1px solid #d0cebc; }
.st-c { width: 45px; padding-left: 5px; border-left: 1px solid #d0cebc; }

/* Taskbar */
.taskbar {
  height: 33px;
  flex: none;
  display: flex;
  align-items: center;
  background: linear-gradient(#2a7aee 0, #2a6fe6 8%, #2458d8 14%, #2458d8 85%, #1a46b0 100%);
  color: #fff;
}
.start {
  width: 96px;
  height: 33px;
  flex: none;
  display: flex;
  align-items: center;
  gap: 4px;
  padding-left: 9px;
  background: linear-gradient(#4c9c4c 0, #3a9a3a 15%, #3c8e3c 60%, #2d7a2d 100%);
  border-radius: 0 10px 10px 0;
}
.start span { font: italic bold 18px/20px "Liberation Sans", Arial, sans-serif; text-shadow: 1px 1px 1px #1a4a1a; }
.tk-grip { width: 4px; height: 26px; margin: 4px 0 0 10px; flex: none; background: repeating-linear-gradient(#1e3c90 0 2px, #2458d8 2px 5px); }
.ql { margin: 3px 0 0 9px; }
.ql + .tk-grip { margin-left: 82px; }
.task {
  height: 25px;
  flex: none;
  margin: 4px 0 0 5px;
  width: 158px;
  padding-left: 9px;
  display: flex;
  align-items: center;
  gap: 3px;
  background: #3c81f3;
  border-radius: 2px;
  white-space: nowrap;
  letter-spacing: -0.1px;
}
.task-on { margin-left: 8px; width: 153px; padding-left: 4px; background: #1e52b7; }
.tray {
  margin-left: auto;
  width: 291px;
  height: 33px;
  flex: none;
  display: flex;
  align-items: center;
  padding: 3px 0 0 10px;
  gap: 2px;
  background: linear-gradient(#18a0ee 0, #0f8bea 10%, #0f8bea 88%, #0a6cc8 100%);
  border-left: 1px solid #0a3e98;
}
.clock { margin-left: 7px; }
```
